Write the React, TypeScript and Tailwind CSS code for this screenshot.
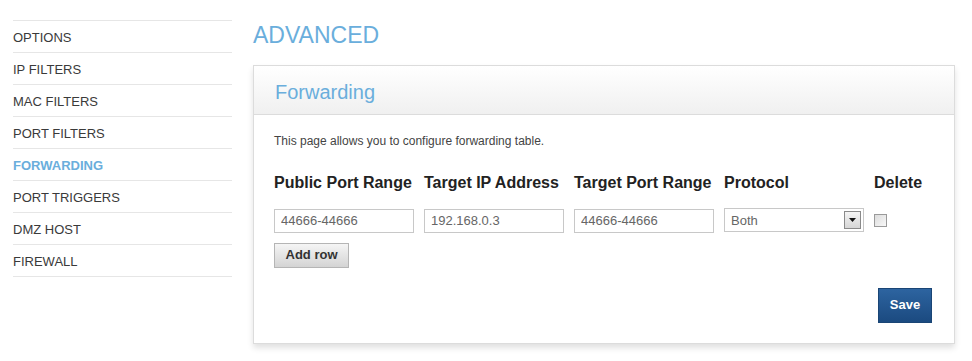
import { useState } from 'react'

const navItems = [
  'OPTIONS',
  'IP FILTERS',
  'MAC FILTERS',
  'PORT FILTERS',
  'FORWARDING',
  'PORT TRIGGERS',
  'DMZ HOST',
  'FIREWALL',
]

const columns = ['Public Port Range', 'Target IP Address', 'Target Port Range', 'Protocol']

export default function App() {
  const [row, setRow] = useState({
    publicRange: '44666-44666',
    targetIp: '192.168.0.3',
    targetRange: '44666-44666',
    protocol: 'Both',
    remove: false,
  })

  return (
    <div className="flex h-[361px] w-[972px] bg-white font-['Liberation_Sans',Arial,sans-serif] text-[#333]">
      {/* SIDEBAR */}
      <nav className="ml-[13px] w-[219px] shrink-0 pt-[20px]">
        <ul className="border-b border-[#e6e6e6]">
          {navItems.map((item) => (
            <li
              key={item}
              className={
                item === 'FORWARDING'
                  ? 'box-border h-[32px] border-t border-[#e6e6e6] pt-[3px] text-[13px] leading-[28px] font-bold text-[#6aaedc]'
                  : 'box-border h-[32px] border-t border-[#e6e6e6] pt-[3px] text-[13px] leading-[28px] text-[#3a3a3a]'
              }
            >
              {item}
            </li>
          ))}
        </ul>
      </nav>

      {/* MAIN */}
      <main className="ml-[21px] pt-[24px]">
        <h1 className="text-[23px] leading-[23px] text-[#6aaedc]">ADVANCED</h1>

        <section className="mt-[18px] w-[702px] border border-[#dcdcdc] bg-white shadow-[0_4px_6px_rgba(0,0,0,0.12)]">
          <div className="box-border h-[49px] border-b border-[#dcdcdc] bg-gradient-to-b from-white to-[#f0f0f0] pt-[14px] pl-[21px]">
            <h2 className="text-[20px] leading-[24px] text-[#6aaedc]">Forwarding</h2>
          </div>

          <div className="px-[20px] pt-[18px] pb-[20px]">
            <p className="text-[12px] leading-[16px] text-[#444]">This page allows you to configure forwarding table.</p>

            <div className="mt-[24px] flex whitespace-nowrap text-[16px] leading-[20px] font-bold text-[#222]">
              {columns.map((col) => (
                <div key={col} className="w-[150px] shrink-0">
                  {col}
                </div>
              ))}
              <div className="shrink-0 pl-[-1px]">Delete</div>
            </div>

            <div className="mt-[15px] flex items-center">
              <div className="w-[150px] shrink-0">
                <input
                  value={row.publicRange}
                  onChange={(e) => setRow({ ...row, publicRange: e.target.value })}
                  className="box-border h-[24px] w-[140px] border border-[#c8c8c8] px-[6px] text-[13px] text-[#666] outline-none"
                />
              </div>
              <div className="w-[150px] shrink-0">
                <input
                  value={row.targetIp}
                  onChange={(e) => setRow({ ...row, targetIp: e.target.value })}
                  className="box-border h-[24px] w-[140px] border border-[#c8c8c8] px-[6px] text-[13px] text-[#666] outline-none"
                />
              </div>
              <div className="w-[150px] shrink-0">
                <input
                  value={row.targetRange}
                  onChange={(e) => setRow({ ...row, targetRange: e.target.value })}
                  className="box-border h-[24px] w-[140px] border border-[#c8c8c8] px-[6px] text-[13px] text-[#666] outline-none"
                />
              </div>
              <div className="w-[150px] shrink-0">
                <div className="box-border flex h-[24px] w-[140px] items-center justify-between border border-[#c8c8c8] pl-[6px] pr-[2px] text-[13px] text-[#666]">
                  <span>{row.protocol}</span>
                  <span className="flex h-[18px] w-[17px] items-center justify-center border border-[#8a8a8a] bg-gradient-to-b from-[#f4f4f4] to-[#d6d6d6]">
                    <svg width="7" height="4" viewBox="0 0 7 4">
                      <path d="M0 0h7L3.5 4z" fill="#111" />
                    </svg>
                  </span>
                </div>
              </div>
              <div className="shrink-0">
                <button
                  onClick={() => setRow({ ...row, remove: !row.remove })}
                  className="box-border block h-[13px] w-[13px] border border-[#9a9a9a] bg-gradient-to-br from-[#dcdcdc] to-[#f8f8f8]"
                />
              </div>
            </div>

            <button className="mt-[10px] box-border h-[25px] w-[75px] border border-[#b5b5b5] bg-gradient-to-b from-[#f5f5f5] to-[#d4d4d4] text-[13px] font-bold text-[#333]">
              Add row
            </button>

            <div className="mt-[20px] flex justify-end pr-[2px]">
              <button className="h-[35px] w-[54px] border border-[#1a4575] bg-gradient-to-b from-[#2d64a0] to-[#1b4a80] text-[13px] font-bold text-white">
                Save
              </button>
            </div>
          </div>
        </section>
      </main>
    </div>
  )
}
